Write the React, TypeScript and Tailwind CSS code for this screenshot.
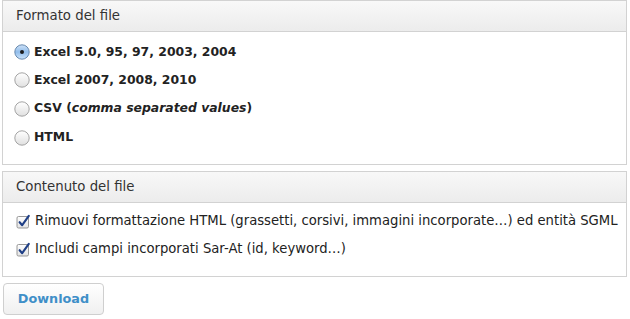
import React from "react";

const font = { fontFamily: '"DejaVu Sans", Verdana, sans-serif' };

function Radio({ checked }: { checked?: boolean }) {
  return (
    <svg width="16" height="16" viewBox="0 0 16 16" className="shrink-0">
      <defs>
        <linearGradient id="rOff" x1="0" y1="0" x2="0" y2="1">
          <stop offset="0" stopColor="#ffffff" />
          <stop offset="1" stopColor="#e0e0e0" />
        </linearGradient>
        <linearGradient id="rOn" x1="0" y1="0" x2="0" y2="1">
          <stop offset="0" stopColor="#cfe2f7" />
          <stop offset="0.5" stopColor="#91bdeb" />
          <stop offset="1" stopColor="#cde4fb" />
        </linearGradient>
      </defs>
      <circle cx="8" cy="8" r="7.2" fill={checked ? "url(#rOn)" : "url(#rOff)"} stroke={checked ? "#5b7fa6" : "#9a9a9a"} strokeWidth="0.9" />
      {checked && <circle cx="8" cy="8" r="2" fill="#1a1a1a" />}
    </svg>
  );
}

function Check() {
  return (
    <svg width="15" height="15" viewBox="0 0 15 15" className="shrink-0">
      <defs>
        <linearGradient id="cb" x1="0" y1="0" x2="0" y2="1">
          <stop offset="0" stopColor="#ffffff" />
          <stop offset="1" stopColor="#e4e4e4" />
        </linearGradient>
      </defs>
      <rect x="1" y="2.5" width="11.5" height="11.5" rx="1.5" fill="url(#cb)" stroke="#8d8d8d" strokeWidth="0.9" />
      <path d="M3.6 8.2 L6.2 11.2 L12.8 1.8" fill="none" stroke="#1f3f86" strokeWidth="2.1" strokeLinecap="round" strokeLinejoin="round" />
    </svg>
  );
}

function Header({ children }: { children: React.ReactNode }) {
  return (
    <div className="h-[31px] flex items-center pl-[13px] text-[13.3px] text-[#333] border-b border-[#d2d2d2] bg-gradient-to-b from-[#f8f8f8] to-[#ececec]">
      {children}
    </div>
  );
}

export default function App() {
  return (
    <div className="w-[630px] h-[319px] bg-white pl-[2px] pr-[3px] pt-0" style={font}>
      <div className="border border-[#d2d2d2]">
        <Header>Formato del file</Header>
        <div className="pt-[6px] pb-[12px] pl-[11px] text-[12.4px] text-[#222] font-bold">
          <div className="h-[28px] flex items-center gap-[4px]"><Radio checked /><span>Excel 5.0, 95, 97, 2003, 2004</span></div>
          <div className="h-[28px] flex items-center gap-[4px]"><Radio /><span>Excel 2007, 2008, 2010</span></div>
          <div className="h-[29px] flex items-center gap-[4px]"><Radio /><span>CSV (<i>comma separated values</i>)</span></div>
          <div className="h-[29px] flex items-center gap-[4px]"><Radio /><span>HTML</span></div>
        </div>
      </div>
      <div className="mt-[6px] border border-[#d2d2d2]">
        <Header>Contenuto del file</Header>
        <div className="pt-[4px] pb-[13px] pl-[13px] text-[13.2px] text-[#222]">
          <div className="h-[28px] flex items-center gap-[4px]"><Check /><span>Rimuovi formattazione HTML (grassetti, corsivi, immagini incorporate…) ed entità SGML</span></div>
          <div className="h-[28px] flex items-center gap-[4px]"><Check /><span>Includi campi incorporati Sar-At (id, keyword…)</span></div>
        </div>
      </div>
      <button className="mt-[6px] ml-[1px] w-[101px] h-[32px] rounded-[4px] border border-[#cfcfcf] bg-gradient-to-b from-[#ffffff] to-[#f0f0f0] text-[12.8px] font-bold text-[#3f8fc8]">
        Download
      </button>
    </div>
  );
}
